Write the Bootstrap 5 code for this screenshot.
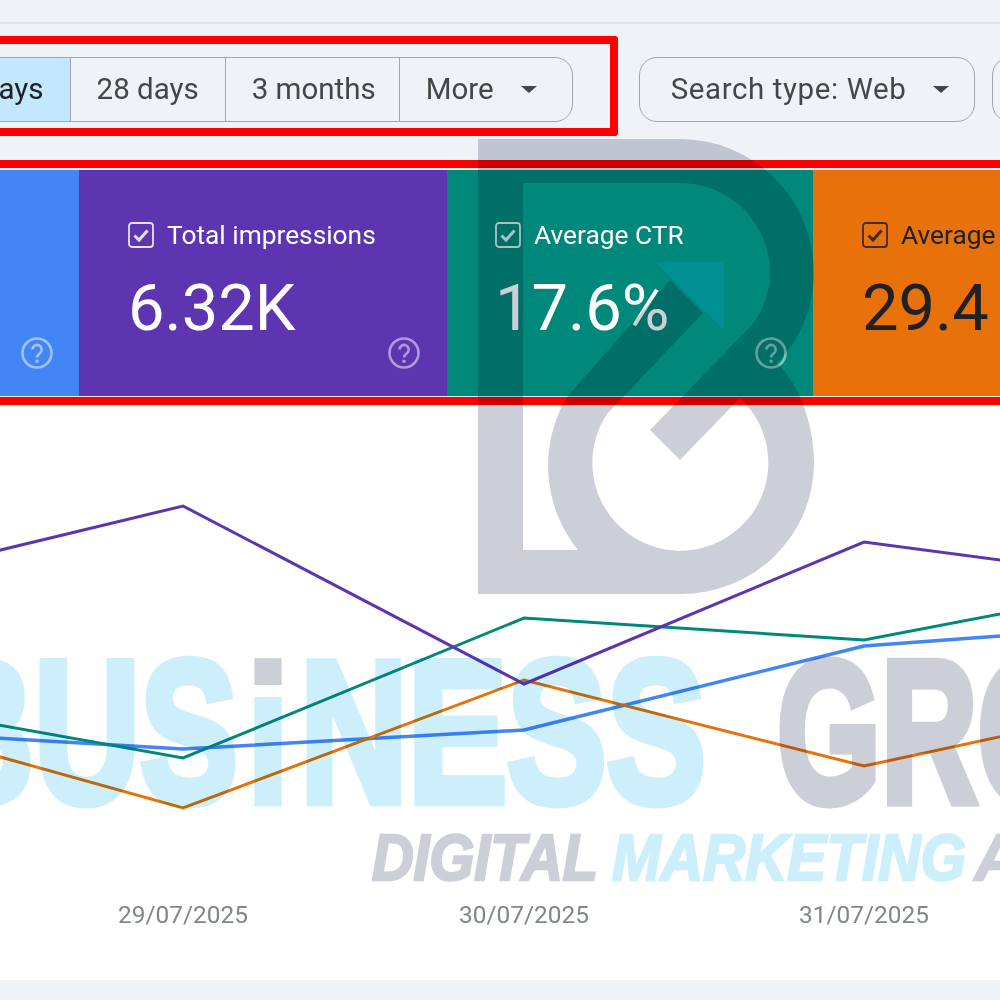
<!DOCTYPE html>
<html lang="en">
<head>
<meta charset="utf-8">
<title>Search performance</title>
<link href="https://cdn.jsdelivr.net/npm/bootstrap@5.3.0/dist/css/bootstrap.min.css" rel="stylesheet">
<style>
html,body{margin:0;background:#eff3f8;overflow:hidden}
.gsc-page{position:relative;width:1000px;height:1000px;overflow:hidden;background:#eff3f8;font-family:Roboto,"Liberation Sans",sans-serif}
.top-strip{height:24px;border-bottom:2px solid #dfe2e6}
.tool-row{margin-left:-107px;margin-top:12px;width:1400px;align-items:flex-start}
.red-box{border:8px solid #f00;border-radius:3px;padding:13px 37px 6px 30px;height:100px}
.seg{display:flex;height:65px;border:1.5px solid #a3a7ab;border-radius:18px;overflow:hidden}
.seg-btn{display:flex;align-items:center;padding:0 26px;font-size:29.5px;color:#444746;border-right:1.5px solid #a3a7ab;white-space:nowrap}
.seg-btn:last-child{border-right:0;padding-right:35px}
.seg-tight{padding-right:23px}
.seg-on{background:#c2e7ff;color:#202124}
.caret-mark{display:inline-block;width:0;height:0;border-left:8px solid transparent;border-right:8px solid transparent;border-top:7px solid #444746;margin-left:27px}
.pill-btn{display:flex;align-items:center;height:65px;margin-top:21px;padding:0 25px 0 31px;font-size:29.5px;letter-spacing:.6px;color:#444746;border:1.5px solid #a3a7ab;border-radius:18px;white-space:nowrap;margin-left:21px}
.pill-blank{margin-left:17px;width:200px}
.metric-band{margin-top:24px;margin-left:-300px;width:1500px;border:8px solid #f00;border-left-width:12px;padding:2px 0 1px;background:#eceaf4;display:flex;height:245px}
.tile{width:367px;flex:none;position:relative;color:#fff;padding:50px 0 0 49px}
.tile-blue{background:#4285f4}
.tile-purple{background:#5e35b1;width:368px}
.tile-teal{background:#00897b;width:366px;padding-left:48px}
.tile-orange{background:#e8710a;color:#202124}
.tile-head{display:flex;align-items:center;gap:13px;font-size:26.3px;line-height:30px;white-space:nowrap}
.tile-check{opacity:.85;flex:none}
.tile-value{font-size:65px;line-height:76px;margin-top:20px}
.tile-help{position:absolute;right:26px;bottom:27px;width:32px;height:32px;opacity:.5}
.tile-purple .tile-help{right:27px}
.chart-panel{background:#fff;height:575px}
.chart-panel svg{display:block}
.axis-label{font-family:Roboto,"Liberation Sans",sans-serif;font-size:24.4px;fill:#80868b}
.wm-layer{position:absolute;left:0;top:0;pointer-events:none;mix-blend-mode:multiply}
.wm-arrow{position:absolute;left:0;top:0;pointer-events:none}
.wm-big{font-family:"Liberation Sans Narrow","Liberation Sans",sans-serif;font-weight:700;font-size:202px;stroke-width:9px;stroke-linejoin:miter}
.wm-small{font-family:"Liberation Sans Narrow","Liberation Sans",sans-serif;font-weight:700;font-style:italic;font-size:64px;stroke-width:2.5px}
.wm-blue{fill:#cdeffc;stroke:#cdeffc}
.wm-grey{fill:#cdcfd8;stroke:#cdcfd8}
</style>
</head>
<body>
<div class="gsc-page">
  <div class="top-strip"></div>
  <div class="tool-row d-flex">
    <div class="red-box">
      <div class="seg">
        <div class="seg-btn seg-on">7 days</div>
        <div class="seg-btn">28 days</div>
        <div class="seg-btn seg-tight">3 months</div>
        <div class="seg-btn">More<span class="caret-mark"></span></div>
      </div>
    </div>
    <div class="pill-btn">Search type: Web<span class="caret-mark"></span></div>
    <div class="pill-btn pill-blank"></div>
  </div>
  <div class="metric-band">
    <div class="tile tile-blue">
      <svg class="tile-help" viewBox="0 0 32 32"><circle cx="16" cy="16" r="14.5" fill="none" stroke="currentColor" stroke-width="2.6"/><path d="M11.5 12.5a4.6 4.6 0 1 1 7.4 3.7c-1.7 1.3-2.9 2.2-2.9 4.3" fill="none" stroke="currentColor" stroke-width="2.6"/><circle cx="16" cy="24.3" r="1.7" fill="currentColor"/></svg>
    </div>
    <div class="tile tile-purple">
      <div class="tile-head"><svg class="tile-check" width="26" height="26" viewBox="0 0 26 26"><rect x="1" y="1" width="24" height="24" rx="3" fill="none" stroke="currentColor" stroke-width="1.8"/><path d="M6.5 13.5l4.5 4.5 8.5-9.5" fill="none" stroke="currentColor" stroke-width="3"/></svg>Total impressions</div>
      <div class="tile-value">6.32K</div>
      <svg class="tile-help" viewBox="0 0 32 32"><circle cx="16" cy="16" r="14.5" fill="none" stroke="currentColor" stroke-width="2.6"/><path d="M11.5 12.5a4.6 4.6 0 1 1 7.4 3.7c-1.7 1.3-2.9 2.2-2.9 4.3" fill="none" stroke="currentColor" stroke-width="2.6"/><circle cx="16" cy="24.3" r="1.7" fill="currentColor"/></svg>
    </div>
    <div class="tile tile-teal">
      <div class="tile-head"><svg class="tile-check" width="26" height="26" viewBox="0 0 26 26"><rect x="1" y="1" width="24" height="24" rx="3" fill="none" stroke="currentColor" stroke-width="1.8"/><path d="M6.5 13.5l4.5 4.5 8.5-9.5" fill="none" stroke="currentColor" stroke-width="3"/></svg>Average CTR</div>
      <div class="tile-value">17.6%</div>
      <svg class="tile-help" viewBox="0 0 32 32"><circle cx="16" cy="16" r="14.5" fill="none" stroke="currentColor" stroke-width="2.6"/><path d="M11.5 12.5a4.6 4.6 0 1 1 7.4 3.7c-1.7 1.3-2.9 2.2-2.9 4.3" fill="none" stroke="currentColor" stroke-width="2.6"/><circle cx="16" cy="24.3" r="1.7" fill="currentColor"/></svg>
    </div>
    <div class="tile tile-orange">
      <div class="tile-head"><svg class="tile-check" width="26" height="26" viewBox="0 0 26 26"><rect x="1" y="1" width="24" height="24" rx="3" fill="none" stroke="currentColor" stroke-width="1.8"/><path d="M6.5 13.5l4.5 4.5 8.5-9.5" fill="none" stroke="currentColor" stroke-width="3"/></svg>Average position</div>
      <div class="tile-value">29.4</div>
    </div>
  </div>
  <div class="chart-panel">
    <svg width="1000" height="575" viewBox="0 405 1000 575" fill="none" stroke-width="3">
      <polyline stroke="#4285f4" stroke-width="3.5" points="-157,729 183,749 524,730 864,646 1204,621"/>
      <polyline stroke="#00897b" points="-157,697 183,758 524,618 864,640 1204,575"/>
      <polyline stroke="#e8710a" points="-157,713 183,808 524,680 864,766 1204,693"/>
      <polyline stroke="#5e35b1" points="-157,588 183,506 524,684 864,542 1204,587"/>
      <text class="axis-label" stroke="none" x="183" y="923" text-anchor="middle">29/07/2025</text>
      <text class="axis-label" stroke="none" x="524" y="923" text-anchor="middle">30/07/2025</text>
      <text class="axis-label" stroke="none" x="864" y="923" text-anchor="middle">31/07/2025</text>
    </svg>
  </div>
  <svg class="wm-layer" width="1000" height="1000" viewBox="0 0 1000 1000">
    <defs>
      <clipPath id="dotClip"><rect x="240" y="650" width="60" height="35"/></clipPath>
      <clipPath id="stemClip"><rect x="240" y="697" width="60" height="130"/></clipPath>
    </defs>
    <path fill="#cdcfd8" fill-rule="evenodd" d="M478 139H680A134 134 0 0 1 814 273C814 310 798 342 777 363C800 385 814 425 814 463A133 131 0 0 1 681 594H478ZM523 183H680A90 90 0 0 1 770 273C770 295 761 316 747 330L650 430L680 460L740 398A88 88 0 1 1 607 414L703 313L670 280L567 397A134 134 0 0 0 578 550H523Z"/>
    <g class="wm-big">
      <text class="wm-blue" x="-72" y="802" textLength="310" lengthAdjust="spacingAndGlyphs">BUS</text>
      <text class="wm-blue" x="248" y="802" textLength="40" lengthAdjust="spacingAndGlyphs" clip-path="url(#stemClip)">I</text>
      <text class="wm-grey" x="248" y="802" textLength="40" lengthAdjust="spacingAndGlyphs" clip-path="url(#dotClip)">I</text>
      <text class="wm-blue" x="300" y="802" textLength="406" lengthAdjust="spacingAndGlyphs">NESS</text>
      <text class="wm-grey" x="777" y="802" textLength="490" lengthAdjust="spacingAndGlyphs">GROUP</text>
    </g>
    <g class="wm-small">
      <text class="wm-grey" x="372" y="880" textLength="226" lengthAdjust="spacingAndGlyphs">DIGITAL</text>
      <text class="wm-blue" x="612" y="880" textLength="354" lengthAdjust="spacingAndGlyphs">MARKETING</text>
      <text class="wm-grey" x="975" y="880" textLength="260" lengthAdjust="spacingAndGlyphs">AGENCY</text>
    </g>
  </svg>
  <svg class="wm-arrow" width="1000" height="1000" viewBox="0 0 1000 1000"><polygon fill="#008f92" points="655,262 724,262 724,330"/></svg>
</div>
<script src="https://cdn.jsdelivr.net/npm/bootstrap@5.3.0/dist/js/bootstrap.bundle.min.js"></script>
</body>
</html>
